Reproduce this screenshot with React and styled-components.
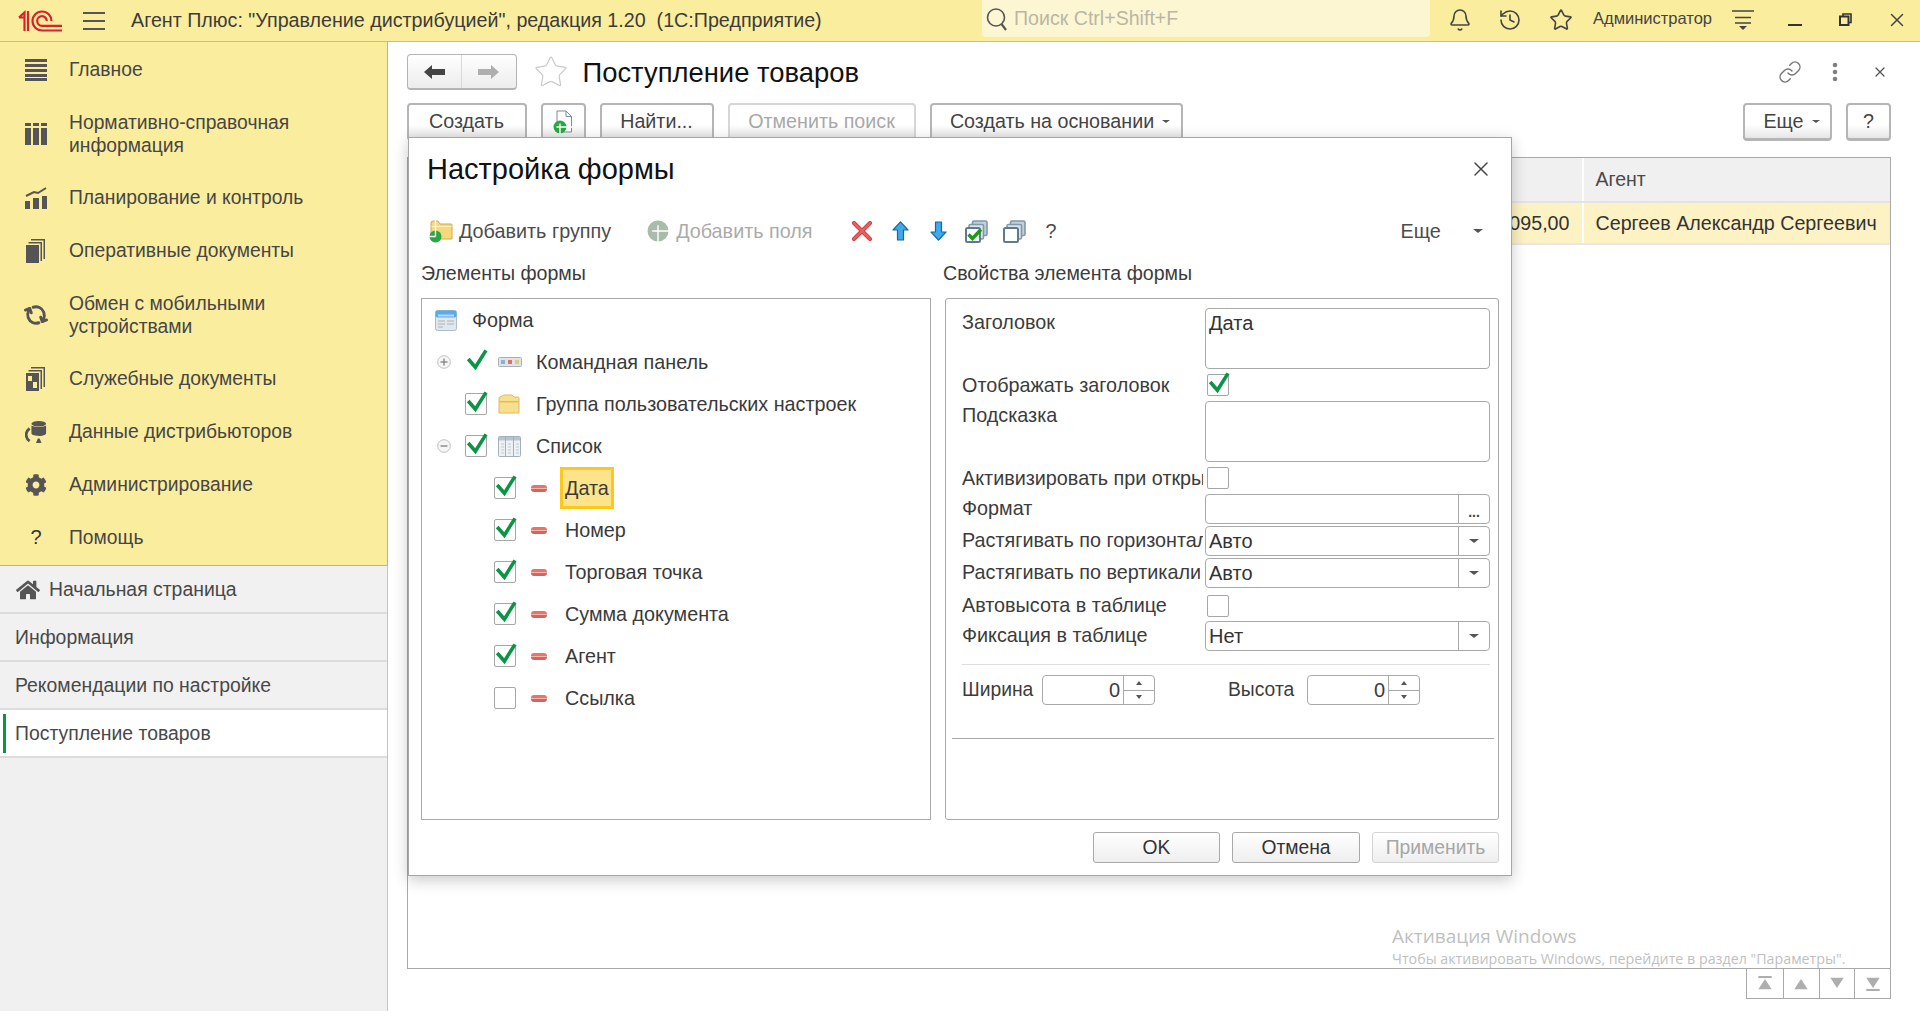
import React from "react";
import styled, { createGlobalStyle } from "styled-components";
import { Bell, History, Star, Link as LinkIcon, X, RefreshCw } from "lucide-react";
import { FaCog, FaHome } from "react-icons/fa";

const Global = createGlobalStyle`
  html, body { margin: 0; padding: 0; width: 100%; height: 100%; overflow: hidden; background: #fff; }
  #root { height: 100%; }
  * { box-sizing: border-box; }
  body { font-family: "Liberation Sans", Arial, sans-serif; font-size: 19px; color: #333; }
`;

const Page = styled.div`
  position: relative;
  width: 1920px;
  height: 1011px;
  display: flex;
  flex-direction: column;
  overflow: hidden;
`;

/* ---------- top bar ---------- */
const TopBar = styled.header`
  height: 42px;
  flex: none;
  display: flex;
  align-items: center;
  background: #fbed9e;
  border-bottom: 1px solid #cfc06c;
`;
const LogoSlot = styled.div`
  margin-left: 18px;
  width: 45px;
  height: 22px;
  display: flex;
`;
const Burger = styled.div`
  margin-left: 20px;
  width: 22px;
  height: 18px;
  display: flex;
  flex-direction: column;
  justify-content: space-between;
  span { display: block; height: 2px; background: #555; }
`;
const AppTitle = styled.div`
  margin-left: 26px;
  flex: 1;
  font-size: 19.7px;
  color: #3c3c3c;
  white-space: pre;
`;
const Search = styled.div`
  align-self: flex-start;
  width: 448px;
  height: 37px;
  background: #fdf6d2;
  border-radius: 0 0 4px 4px;
  display: flex;
  align-items: center;
  padding-left: 4px;
  gap: 6px;
  color: #b9b6a6;
  font-size: 19.6px;
`;
const TopIcons = styled.div`
  width: 490px;
  display: flex;
  align-items: center;
  padding-bottom: 2px;
  color: #444;
`;
const TopSlot = styled.div`
  margin-left: ${(p) => p.$ml}px;
  display: flex;
  align-items: center;
`;
const UserName = styled.span`
  margin-left: 20px;
  padding-bottom: 2px;
  font-size: 16.5px;
  color: #444;
  white-space: nowrap;
`;

/* ---------- body ---------- */
const Body = styled.div`
  flex: 1;
  display: flex;
  min-height: 0;
`;
const Sidebar = styled.aside`
  width: 388px;
  flex: none;
  display: flex;
  flex-direction: column;
  background: #f0f0f0;
  border-right: 1px solid #c4c4c4;
`;
const NavSection = styled.nav`
  height: 524px;
  flex: none;
  padding-top: 1px;
  background: #fbed9e;
  border-bottom: 1px solid #c9b65f;
  margin-right: -1px;
  border-right: 1px solid #c9b65f;
`;
const NavItem = styled.div`
  display: flex;
  align-items: center;
  padding: ${(p) => (p.$double ? "14.5px" : "15px")} 0 ${(p) => (p.$double ? "14.5px" : "15px")} 25px;
  line-height: 23px;
  color: #464646;
  font-size: 19.3px;
`;
const NavIconBox = styled.div`
  width: 22px;
  height: 22px;
  flex: none;
  margin-right: 22px;
  color: #555;
  display: flex;
  align-items: center;
  justify-content: center;
`;
const HelpMark = styled.span`
  font-size: 20px;
  color: #333;
`;
const TabItem = styled.div`
  position: relative;
  height: 48px;
  flex: none;
  display: flex;
  align-items: center;
  padding: 1px 0 0 15px;
  border-bottom: 2px solid #dcdcdc;
  background: ${(p) => (p.$active ? "#fff" : "#f1f1f1")};
  color: #484848;
  font-size: 19.4px;
  ${(p) =>
    p.$active &&
    `&::before { content: ""; position: absolute; left: 3px; top: 4px; bottom: 3px; width: 3px; background: #0e9447; }`}
`;
const HomeGlyph = styled.span`
  display: flex;
  margin-left: 1px;
  margin-right: 9px;
  color: #555;
`;

/* ---------- main ---------- */
const Main = styled.main`
  flex: 1;
  min-width: 0;
  display: flex;
  flex-direction: column;
  padding: 12px 29px 0 18.5px;
  background: #fff;
`;
const TitleRow = styled.div`
  height: 36px;
  display: flex;
  align-items: center;
`;
const NavPair = styled.div`
  width: 110px;
  height: 36px;
  display: flex;
  border: 1px solid #b4b4b4;
  border-bottom-width: 2px;
  border-radius: 4px;
  background: linear-gradient(#fff, #ececec);
`;
const NavPairCell = styled.div`
  flex: 1;
  display: flex;
  align-items: center;
  justify-content: center;
  & + & { border-left: 1px solid #d8d8d8; }
`;
const StarSlot = styled.div`
  margin-left: 16px;
  display: flex;
  color: #c9c9c9;
`;
const PageTitle = styled.h1`
  margin: 1px 0 0 14px;
  flex: 1;
  font-size: 27.4px;
  font-weight: 400;
  color: #111;
`;
const TitleTools = styled.div`
  display: flex;
  align-items: center;
  color: #777;
`;
const ToolSlot = styled.div`
  margin-left: ${(p) => p.$ml}px;
  display: flex;
  align-items: center;
`;
const ToolBar = styled.div`
  margin-top: 13px;
  height: 38px;
  display: flex;
  gap: 14px;
  flex: none;
`;
const Btn = styled.div`
  width: ${(p) => p.$w}px;
  height: 38px;
  flex: none;
  display: flex;
  align-items: center;
  justify-content: center;
  gap: 8px;
  padding-left: ${(p) => (p.$menu ? 8 : 0)}px;
  border: 2px solid ${(p) => (p.$off ? "#d6d6d6" : "#b5b5b5")};
  border-bottom-width: 3px;
  border-radius: 4px;
  background: linear-gradient(#fff 60%, #e6e6e6);
  color: ${(p) => (p.$off ? "#a8a8a8" : "#444")};
  font-size: 19.7px;
  margin-left: ${(p) => (p.$push ? "auto" : "0")};
`;
const Caret = styled.span`
  width: 0;
  height: 0;
  flex: none;
  border-left: ${(p) => p.$s || 4}px solid transparent;
  border-right: ${(p) => p.$s || 4}px solid transparent;
  border-top: ${(p) => (p.$s ? p.$s - 1 : 3)}px solid #555;
`;
const Table = styled.section`
  margin-top: 16px;
  height: 812px;
  flex: none;
  border: 1px solid #a9a9a9;
  display: flex;
  flex-direction: column;
`;
const TableHead = styled.div`
  height: 45px;
  display: grid;
  grid-template-columns: 1174px 1fr;
  gap: 2px;
  background: #fff;
  border-bottom: 2px solid #e3e3e3;
`;
const HeadCell = styled.div`
  background: #f0f0f0;
  display: flex;
  align-items: center;
  padding-left: 12px;
  color: #4a4a4a;
  font-size: 19.5px;
`;
const TableRow = styled.div`
  height: 42px;
  display: grid;
  grid-template-columns: 1174px 1fr;
  gap: 2px;
  border-bottom: 2px solid #e8e8e8;
`;
const RowCell = styled.div`
  background: #fdf2c4;
  display: flex;
  align-items: center;
  justify-content: ${(p) => (p.$right ? "flex-end" : "flex-start")};
  padding: 0 ${(p) => (p.$right ? "12px" : "0")} 0 ${(p) => (p.$right ? "0" : "12px")};
  color: #333;
  font-size: 19.7px;
  white-space: nowrap;
  overflow: hidden;
`;
const Pager = styled.div`
  align-self: flex-end;
  margin-top: -1px;
  width: 145px;
  height: 31px;
  display: grid;
  grid-template-columns: repeat(4, 1fr);
  border: 1px solid #a9a9a9;
`;
const PagerCell = styled.div`
  display: flex;
  align-items: center;
  justify-content: center;
  & + & { border-left: 1px solid #a9a9a9; }
`;
const Watermark = styled.div`
  position: absolute;
  left: 1392px;
  top: 922px;
  font-family: "Open Sans", sans-serif;
  color: #bfbfbf;
  pointer-events: none;
  white-space: nowrap;
`;
const WmTitle = styled.div`
  font-size: 19px;
  line-height: 28px;
`;
const WmText = styled.div`
  font-size: 14.25px;
  line-height: 17px;
`;

/* ---------- modal ---------- */
const Modal = styled.div`
  position: absolute;
  left: 408px;
  top: 137px;
  width: 1104px;
  height: 739px;
  background: #fff;
  border: 1px solid #a6a6a6;
  box-shadow: 0 4px 14px rgba(0, 0, 0, 0.22);
  display: flex;
  flex-direction: column;
  padding: 1px 12px 0;
`;
const ModalHead = styled.div`
  height: 60px;
  flex: none;
  display: flex;
  align-items: center;
  justify-content: space-between;
  padding: 0 6px 0 6px;
`;
const ModalTitle = styled.h2`
  margin: 0;
  font-size: 29px;
  font-weight: 400;
  color: #111;
`;
const CloseSlot = styled.div`
  display: flex;
  color: #444;
`;
const ActionBar = styled.div`
  margin-top: 7px;
  height: 50px;
  flex: none;
  display: flex;
  align-items: center;
  padding-left: 8px;
`;
const ActionItem = styled.div`
  margin-left: ${(p) => p.$ml || 0}px;
  display: flex;
  align-items: center;
  gap: ${(p) => p.$gap || 0}px;
  color: ${(p) => (p.$off ? "#ababab" : "#4c4c4c")};
  font-size: 19.8px;
`;
const ColumnsHead = styled.div`
  margin-top: 5px;
  height: 24px;
  flex: none;
  display: grid;
  grid-template-columns: 510px 1fr;
  gap: 12px;
  align-items: center;
  color: #3c3c3c;
  font-size: 19.6px;
`;
const Columns = styled.div`
  margin-top: 13px;
  height: 522px;
  flex: none;
  display: grid;
  grid-template-columns: 510px 554px;
  gap: 14px;
`;
const TreePanel = styled.div`
  border: 1px solid #a9a9a9;
  display: flex;
  flex-direction: column;
`;
const TreeRow = styled.div`
  height: 42px;
  flex: none;
  display: flex;
  align-items: center;
  padding-left: ${(p) => p.$pl}px;
  color: #3a3a3a;
  font-size: 19.75px;
`;
const Expander = styled.div`
  width: 14px;
  height: 14px;
  flex: none;
  margin-right: 14px;
  display: flex;
`;
const IconSlotL = styled.div`
  flex: none;
  display: flex;
  width: ${(p) => p.$w}px;
  margin: 0 ${(p) => p.$mr}px 0 ${(p) => p.$ml || 0}px;
`;
const CheckBoxBox = styled.div`
  position: relative;
  width: 22px;
  height: 22px;
  flex: none;
  border: 1px solid ${(p) => (p.$bare ? "transparent" : "#a6a6a6")};
  border-radius: 2px;
  background: #fff;
  margin-left: ${(p) => p.$ml || 0}px;
  svg { position: absolute; left: -1px; top: -1px; overflow: visible; }
`;
const Minus = styled.div`
  width: 16px;
  height: 7px;
  flex: none;
  margin: 0 13px 0 15px;
  border-radius: 3px;
  background: linear-gradient(#e2766d 0 40%, #f3b6ae 40% 60%, #d9635a 60%);
`;
const TreeLabel = styled.div`
  height: 42px;
  display: flex;
  align-items: center;
  padding: 0 2px;
  border: 3px solid ${(p) => (p.$sel ? "#fcc81f" : "transparent")};
  background: ${(p) => (p.$sel ? "#fde38a" : "transparent")};
`;
const PropsPanel = styled.div`
  border: 1px solid #a9a9a9;
  border-radius: 3px;
  padding: 9px 8px 0 16px;
  display: flex;
  flex-direction: column;
`;
const PropRow = styled.div`
  height: ${(p) => p.$h}px;
  flex: none;
  display: grid;
  grid-template-columns: 241px 1fr;
  gap: 2px;
  align-items: ${(p) => (p.$top ? "start" : "center")};
`;
const PropLabel = styled.div`
  overflow: hidden;
  white-space: nowrap;
  line-height: 23px;
  color: #3c3c3c;
  font-size: 19.8px;
  padding-top: ${(p) => (p.$top ? 3 : 0)}px;
`;
const TextArea = styled.div`
  height: 61px;
  border: 1px solid #a9a9a9;
  border-radius: 4px;
  padding: 3px 3px;
  line-height: 23px;
  color: #333;
  font-size: 20px;
`;
const Field = styled.div`
  height: 30px;
  align-self: start;
  border: 1px solid #a9a9a9;
  border-radius: 4px;
  display: flex;
  align-items: stretch;
  color: #333;
  font-size: 20px;
`;
const FieldValue = styled.div`
  flex: 1;
  display: flex;
  align-items: center;
  padding-left: 3px;
`;
const FieldButton = styled.div`
  width: 31px;
  flex: none;
  border-left: 1px solid #a9a9a9;
  display: flex;
  align-items: center;
  justify-content: center;
  font-weight: 700;
  font-size: 14px;
  padding-top: ${(p) => (p.$dots ? 6 : 0)}px;
  color: #444;
`;
const Separator = styled.div`
  margin-top: 13px;
  height: 1px;
  flex: none;
  background: #dedede;
`;
const SizeRow = styled.div`
  margin-top: 10px;
  height: 30px;
  flex: none;
  display: flex;
  align-items: center;
  color: #3c3c3c;
  font-size: 19.3px;
`;
const SizeLabel = styled.div`
  width: ${(p) => p.$w}px;
  flex: none;
  margin-left: ${(p) => p.$ml || 0}px;
`;
const Spin = styled.div`
  width: 113px;
  height: 30px;
  flex: none;
  border: 1px solid #a9a9a9;
  border-radius: 4px;
  display: flex;
  font-size: 20px;
`;
const SpinValue = styled.div`
  flex: 1;
  display: flex;
  align-items: center;
  justify-content: flex-end;
  padding-right: 3px;
`;
const SpinArrows = styled.div`
  width: 31px;
  flex: none;
  border-left: 1px solid #a9a9a9;
  display: flex;
  flex-direction: column;
`;
const SpinArrow = styled.div`
  flex: 1;
  display: flex;
  align-items: center;
  justify-content: center;
  & + & { border-top: 1px solid #a9a9a9; }
  span {
    width: 0;
    height: 0;
    border-left: 3px solid transparent;
    border-right: 3px solid transparent;
    ${(p) => (p.$up ? "border-bottom: 4px solid #555;" : "border-top: 4px solid #555;")}
  }
`;
const BottomRule = styled.div`
  margin: 33px -4px 0 -10px;
  height: 1px;
  flex: none;
  background: #a9a9a9;
`;
const Footer = styled.div`
  margin-top: 12px;
  display: flex;
  justify-content: flex-end;
  gap: 12px;
  padding-right: 0;
`;
const FootBtn = styled.div`
  width: ${(p) => p.$w}px;
  height: 31px;
  display: flex;
  align-items: center;
  justify-content: center;
  border: 1px solid ${(p) => (p.$off ? "#d4d4d4" : "#a9a9a9")};
  border-radius: 3px;
  background: linear-gradient(#fff, #eeeeee);
  color: ${(p) => (p.$off ? "#a6a6a6" : "#333")};
  font-size: 19.3px;
`;

/* ---------- drawings ---------- */
const Logo = () => (
  <svg width="45" height="22" viewBox="0 0 45 22" fill="none" stroke="#d8222b" strokeWidth="2.2">
    <path d="M1 7.5 L6.5 2.5 V21 M10 1 V21 M1 7.5 L6.5 7.5" />
    <path d="M44 20.5 H24 A9.5 9.5 0 1 1 33.5 11" />
    <path d="M44 15.8 H24 A4.8 4.8 0 1 1 28.8 11" />
  </svg>
);
const MainMenuIcon = () => (
  <svg width="22" height="22" viewBox="0 0 22 22" fill="currentColor">
    {[0, 5, 10, 15, 19].map((y) => (
      <rect key={y} x="0" y={y} width="22" height="3" />
    ))}
  </svg>
);
const CatalogIcon = () => (
  <svg width="22" height="22" viewBox="0 0 22 22" fill="currentColor">
    {[0, 8, 16].map((x) => (
      <g key={x}>
        <rect x={x} y="0" width="6" height="3" />
        <rect x={x} y="5" width="6" height="17" />
      </g>
    ))}
  </svg>
);
const PlanIcon = () => (
  <svg width="22" height="22" viewBox="0 0 22 22" fill="currentColor">
    <rect x="0" y="14" width="5" height="8" />
    <rect x="8" y="11" width="6" height="11" />
    <rect x="17" y="9" width="5" height="13" />
    <path d="M1 9 L9 5 L13 6 L21 1" fill="none" stroke="currentColor" strokeWidth="2" />
  </svg>
);
const DocsIcon = () => (
  <svg width="22" height="24" viewBox="0 0 22 24" fill="currentColor">
    <path d="M6 0 H20 V20 H18.5 V1.5 H6 Z" />
    <path d="M3.5 3 H17 V22 H15.5 V4.5 H3.5 Z" />
    <rect x="1" y="6" width="13" height="18" />
  </svg>
);
const ServiceIcon = () => (
  <svg width="22" height="24" viewBox="0 0 22 24" fill="currentColor">
    <path d="M6 0 H20 V20 H18.5 V1.5 H6 Z" />
    <path d="M3.5 3 H17 V22 H15.5 V4.5 H3.5 Z" />
    <rect x="1" y="6" width="13" height="18" />
    <rect x="3" y="9" width="4" height="5" fill="#fbed9e" />
    <rect x="8" y="15" width="4" height="6" fill="#fbed9e" />
  </svg>
);
const DistribIcon = () => (
  <svg width="24" height="24" viewBox="0 0 24 24">
    <ellipse cx="15" cy="3" rx="8" ry="3" fill="currentColor" />
    <path d="M7 5 C9 7 21 7 23 5 V14 C21 16 18 17 14 16 C10 16 7 15 7 13 Z" fill="currentColor" />
    <path d="M5 8 C0 12 0 18 5 22" fill="none" stroke="currentColor" strokeWidth="3" />
    <path d="M14 19 L12 24 H18 L16 19 Z" fill="currentColor" />
  </svg>
);
const ArrowH = ({ left, color }) => (
  <svg width="21" height="14" viewBox="0 0 21 14" fill={color}>
    <path d={left ? "M0 7 L8 0 V4 H21 V10 H8 V14 Z" : "M21 7 L13 0 V4 H0 V10 H13 V14 Z"} />
  </svg>
);
const PlusBadge = ({ cx, cy, r, fill }) => (
  <g>
    <circle cx={cx} cy={cy} r={r} fill={fill} />
    <path
      d={`M${cx - r * 0.55} ${cy} H${cx + r * 0.55} M${cx} ${cy - r * 0.55} V${cy + r * 0.55}`}
      stroke="#fff"
      strokeWidth="1.4"
    />
  </g>
);
const NewDocIcon = () => (
  <svg width="20" height="24" viewBox="0 0 20 24" fill="none">
    <path d="M4 1 H13 L18.5 6.5 V22 H4 Z M13 1 V6.5 H18.5" fill="#fff" stroke="#7d8c99" strokeWidth="1" />
    <PlusBadge cx="7" cy="17" r="6.5" fill="#27a843" />
  </svg>
);
const FolderAddIcon = () => (
  <svg width="24" height="23" viewBox="0 0 24 23">
    <path d="M2 3 Q2 1 4 1 H9 L11 4 H22 Q23 4 23 5 V19 H2 Z" fill="#f6d97c" stroke="#dba44a" strokeWidth="1" />
    <rect x="2.5" y="6" width="20" height="1" fill="#fff3c4" />
    <PlusBadge cx="6.5" cy="16.5" r="6" fill="#27a843" />
  </svg>
);
const GrayPlusIcon = () => (
  <svg width="22" height="22" viewBox="0 0 22 22">
    <PlusBadge cx="11" cy="11" r="10.5" fill="#a9bca9" />
  </svg>
);
const RedCross = () => (
  <svg width="20" height="20" viewBox="0 0 20 20" fill="none">
    <path d="M2 2 L18 18 M18 2 L2 18" stroke="#c93d3d" strokeWidth="4" strokeLinecap="round" />
    <path d="M2 2 L18 18 M18 2 L2 18" stroke="#ee6060" strokeWidth="2.4" strokeLinecap="round" />
  </svg>
);
const BlueArrow = ({ down }) => (
  <svg width="17" height="20" viewBox="0 0 17 20" style={down ? { transform: "scaleY(-1)" } : undefined}>
    <path d="M8.5 0.8 L16 9 H11.5 V19 H5.5 V9 H1 Z" fill="#3fa9ef" stroke="#17689e" strokeWidth="1.2" strokeLinejoin="round" />
  </svg>
);
const StackIcon = ({ checked }) => (
  <svg width="23" height="23" viewBox="0 0 23 23" fill="none">
    <rect x="7.5" y="1" width="14.5" height="14.5" rx="1.5" fill="#c2d0da" stroke="#7f98aa" strokeWidth="1.6" />
    <rect x="4" y="4.5" width="14.5" height="14.5" rx="1.5" fill="#dde5ea" stroke="#7f98aa" strokeWidth="1.6" />
    <rect x="1" y="8" width="14" height="14" rx="1.5" fill="#fff" stroke="#5d7a90" strokeWidth="2" />
    {checked && <path d="M3.5 14.5 L7.5 18.5 L16 9.5" stroke="#1d9a15" strokeWidth="3.4" />}
  </svg>
);
const FormIcon = () => (
  <svg width="22" height="21" viewBox="0 0 22 21">
    <rect x="0.5" y="0.5" width="21" height="20" rx="2" fill="#e1e7ec" stroke="#a9bccb" />
    <rect x="0.5" y="0.5" width="21" height="7" rx="2" fill="#5aabe8" />
    <rect x="3" y="4.5" width="16" height="2" fill="#b7dcf6" />
    <path d="M3 11 H10 M12 11 H19 M3 14 H10 M12 14 H19 M3 17 H8" stroke="#a8b4be" strokeWidth="1" />
  </svg>
);
const CommandIcon = () => (
  <svg width="24" height="10" viewBox="0 0 24 10">
    <rect x="0.5" y="0.5" width="23" height="9" rx="1" fill="#dfe4e8" stroke="#a7b2bb" />
    <rect x="3" y="3" width="4" height="4" fill="#8fb0d0" />
    <rect x="10" y="3" width="4" height="4" fill="#e0706a" />
    <rect x="17" y="3" width="4" height="4" fill="#e3c878" />
  </svg>
);
const FolderIcon = () => (
  <svg width="22" height="20" viewBox="0 0 22 20">
    <path d="M1 4 Q1 3 2 3 L6 1 H14 L16 3 H20 Q21 3 21 4 V19 H1 Z" fill="#f6e08e" stroke="#e4b666" />
    <rect x="1.5" y="7" width="19" height="1.4" fill="#e4b666" />
  </svg>
);
const ListIcon = () => (
  <svg width="23" height="21" viewBox="0 0 23 21" fill="none">
    <rect x="0.5" y="0.5" width="22" height="20" rx="1" fill="#eef1f4" stroke="#a3b0bc" />
    <rect x="1" y="1" width="21" height="3.5" fill="#b7c3cd" />
    <path d="M7.5 1 V20 M15.5 1 V20" stroke="#a3b0bc" />
    <path d="M3 8 H6 M3 11 H6 M3 14 H6 M3 17 H6 M10 8 H13 M10 11 H13 M10 14 H13 M10 17 H13 M18 8 H21 M18 11 H21 M18 14 H21 M18 17 H21" stroke="#c0cad2" />
  </svg>
);
const ExpanderIcon = ({ open }) => (
  <svg width="14" height="14" viewBox="0 0 14 14" fill="none" stroke="#8e8e8e">
    <circle cx="7" cy="7" r="6.3" stroke="#c2c2c2" fill="#f6f6f6" />
    <path d={open ? "M3.5 7 H10.5" : "M3.5 7 H10.5 M7 3.5 V10.5"} strokeWidth="1.5" />
  </svg>
);
const Check = () => (
  <svg width="22" height="22" viewBox="0 0 22 22" fill="none">
    <path d="M3.2 8 L10.4 16.2 L21 -0.6" stroke="#0b9446" strokeWidth="3.6" />
  </svg>
);
const Dots = () => (
  <svg width="6" height="20" viewBox="0 0 6 20" fill="#808080">
    <circle cx="3" cy="3" r="2.3" />
    <circle cx="3" cy="10" r="2.3" />
    <circle cx="3" cy="17" r="2.3" />
  </svg>
);
const FilterMenu = () => (
  <svg width="22" height="22" viewBox="0 0 22 22" stroke="#444" strokeWidth="1.6" fill="none">
    <path d="M0 2 H22 M3 8.5 H19 M3 14 H19" />
    <path d="M7 17 H15 L11 21 Z" fill="#444" stroke="none" />
  </svg>
);
const Restore = () => (
  <svg width="13" height="13" viewBox="0 0 13 13" fill="none" stroke="#333" strokeWidth="2">
    <rect x="1" y="3.5" width="8.5" height="8.5" />
    <path d="M4 3 V1 H12 V9.5 H10" strokeWidth="1.6" />
  </svg>
);
const SearchGlass = () => (
  <svg width="22" height="24" viewBox="0 0 22 24" fill="none" stroke="#555" strokeWidth="1.6">
    <circle cx="10" cy="10.5" r="8.5" />
    <path d="M15.5 17 L20 23" strokeWidth="2.2" />
  </svg>
);
const PagerIcon = ({ down, bar }) => (
  <svg width="14" height="15" viewBox="0 0 16 18" fill="#aeaeae" style={down ? { transform: "scaleY(-1)" } : undefined}>
    {bar && <rect x="0" y="0" width="16" height="2.5" />}
    <path d="M8 3.5 L16 16 H0 Z" />
  </svg>
);

const navItems = [
  { icon: <MainMenuIcon />, text: "Главное" },
  { icon: <CatalogIcon />, text: "Нормативно-справочная\nинформация", double: true },
  { icon: <PlanIcon />, text: "Планирование и контроль" },
  { icon: <DocsIcon />, text: "Оперативные документы" },
  { icon: <RefreshCw size={22} strokeWidth={3.2} style={{ transform: "rotate(70deg)" }} />, text: "Обмен с мобильными\nустройствами", double: true },
  { icon: <ServiceIcon />, text: "Служебные документы" },
  { icon: <DistribIcon />, text: "Данные дистрибьюторов" },
  { icon: <FaCog size={22} />, text: "Администрирование" },
  { icon: <HelpMark>?</HelpMark>, text: "Помощь" },
];
const NavText = styled.span`
  white-space: pre-line;
`;

const subItems = ["Дата", "Номер", "Торговая точка", "Сумма документа", "Агент", "Ссылка"];

const Dropdown = ({ value }) => (
  <Field>
    <FieldValue>{value}</FieldValue>
    <FieldButton>
      <Caret $s={5} />
    </FieldButton>
  </Field>
);
const SpinField = () => (
  <Spin>
    <SpinValue>0</SpinValue>
    <SpinArrows>
      <SpinArrow $up>
        <span />
      </SpinArrow>
      <SpinArrow>
        <span />
      </SpinArrow>
    </SpinArrows>
  </Spin>
);

export default function App() {
  return (
    <Page>
      <Global />
      <TopBar>
        <LogoSlot>
          <Logo />
        </LogoSlot>
        <Burger>
          <span />
          <span />
          <span />
        </Burger>
        <AppTitle>Агент Плюс: "Управление дистрибуцией", редакция 1.20  (1С:Предприятие)</AppTitle>
        <Search>
          <SearchGlass />
          Поиск Ctrl+Shift+F
        </Search>
        <TopIcons>
          <TopSlot $ml={18}>
            <Bell size={24} strokeWidth={1.6} />
          </TopSlot>
          <TopSlot $ml={26}>
            <History size={24} strokeWidth={1.6} />
          </TopSlot>
          <TopSlot $ml={27}>
            <Star size={24} strokeWidth={1.6} />
          </TopSlot>
          <UserName>Администратор</UserName>
          <TopSlot $ml={20}>
            <FilterMenu />
          </TopSlot>
          <TopSlot $ml={34}>
            <svg width="14" height="14" viewBox="0 0 14 14">
              <rect x="0" y="11" width="14" height="2" fill="#333" />
            </svg>
          </TopSlot>
          <TopSlot $ml={37}>
            <Restore />
          </TopSlot>
          <TopSlot $ml={34}>
            <X size={22} strokeWidth={1.6} />
          </TopSlot>
        </TopIcons>
      </TopBar>
      <Body>
        <Sidebar>
          <NavSection>
            {navItems.map((it) => (
              <NavItem key={it.text} $double={it.double}>
                <NavIconBox>{it.icon}</NavIconBox>
                <NavText>{it.text}</NavText>
              </NavItem>
            ))}
          </NavSection>
          <TabItem>
            <HomeGlyph>
              <FaHome size={24} />
            </HomeGlyph>
            Начальная страница
          </TabItem>
          <TabItem>Информация</TabItem>
          <TabItem>Рекомендации по настройке</TabItem>
          <TabItem $active>Поступление товаров</TabItem>
        </Sidebar>
        <Main>
          <TitleRow>
            <NavPair>
              <NavPairCell>
                <ArrowH left color="#444" />
              </NavPairCell>
              <NavPairCell>
                <ArrowH color="#aeaeae" />
              </NavPairCell>
            </NavPair>
            <StarSlot>
              <Star size={36} strokeWidth={0.8} />
            </StarSlot>
            <PageTitle>Поступление товаров</PageTitle>
            <TitleTools>
              <LinkIcon size={24} strokeWidth={1.5} />
              <ToolSlot $ml={30}>
                <Dots />
              </ToolSlot>
              <ToolSlot $ml={34}>
                <X size={16} strokeWidth={1.8} color="#555" />
              </ToolSlot>
              <ToolSlot $ml={3} />
            </TitleTools>
          </TitleRow>
          <ToolBar>
            <Btn $w={120}>Создать</Btn>
            <Btn $w={45}>
              <NewDocIcon />
            </Btn>
            <Btn $w={114}>Найти...</Btn>
            <Btn $w={188} $off>
              Отменить поиск
            </Btn>
            <Btn $w={253} $menu>
              Создать на основании
              <Caret />
            </Btn>
            <Btn $w={89} $push $menu>
              Еще
              <Caret />
            </Btn>
            <Btn $w={45}>?</Btn>
          </ToolBar>
          <Table>
            <TableHead>
              <HeadCell />
              <HeadCell>Агент</HeadCell>
            </TableHead>
            <TableRow>
              <RowCell $right>1 095,00</RowCell>
              <RowCell>Сергеев Александр Сергеевич</RowCell>
            </TableRow>
          </Table>
          <Pager>
            <PagerCell>
              <PagerIcon bar />
            </PagerCell>
            <PagerCell>
              <PagerIcon />
            </PagerCell>
            <PagerCell>
              <PagerIcon down />
            </PagerCell>
            <PagerCell>
              <PagerIcon down bar />
            </PagerCell>
          </Pager>
        </Main>
      </Body>

      <Watermark>
        <WmTitle>Активация Windows</WmTitle>
        <WmText>Чтобы активировать Windows, перейдите в раздел "Параметры".</WmText>
      </Watermark>

      <Modal>
        <ModalHead>
          <ModalTitle>Настройка формы</ModalTitle>
          <CloseSlot>
            <X size={24} strokeWidth={1.5} />
          </CloseSlot>
        </ModalHead>
        <ActionBar>
          <ActionItem $gap={6}>
            <FolderAddIcon />
            Добавить группу
          </ActionItem>
          <ActionItem $ml={36} $gap={7} $off>
            <GrayPlusIcon />
            Добавить поля
          </ActionItem>
          <ActionItem $ml={39}>
            <RedCross />
          </ActionItem>
          <ActionItem $ml={20}>
            <BlueArrow />
          </ActionItem>
          <ActionItem $ml={21}>
            <BlueArrow down />
          </ActionItem>
          <ActionItem $ml={18}>
            <StackIcon checked />
          </ActionItem>
          <ActionItem $ml={15}>
            <StackIcon />
          </ActionItem>
          <ActionItem $ml={20}>?</ActionItem>
          <ActionItem $ml={344}>Еще</ActionItem>
          <ActionItem $ml={32}>
            <Caret $s={5} />
          </ActionItem>
        </ActionBar>
        <ColumnsHead>
          <span>Элементы формы</span>
          <span>Свойства элемента формы</span>
        </ColumnsHead>
        <Columns>
          <TreePanel>
            <TreeRow $pl={13}>
              <IconSlotL $w={22} $mr={15}>
                <FormIcon />
              </IconSlotL>
              Форма
            </TreeRow>
            <TreeRow $pl={15}>
              <Expander>
                <ExpanderIcon />
              </Expander>
              <CheckBoxBox $bare>
                <Check />
              </CheckBoxBox>
              <IconSlotL $w={24} $mr={14} $ml={11}>
                <CommandIcon />
              </IconSlotL>
              Командная панель
            </TreeRow>
            <TreeRow $pl={15}>
              <Expander />
              <CheckBoxBox>
                <Check />
              </CheckBoxBox>
              <IconSlotL $w={24} $mr={14} $ml={11}>
                <FolderIcon />
              </IconSlotL>
              Группа пользовательских настроек
            </TreeRow>
            <TreeRow $pl={15}>
              <Expander>
                <ExpanderIcon open />
              </Expander>
              <CheckBoxBox>
                <Check />
              </CheckBoxBox>
              <IconSlotL $w={24} $mr={14} $ml={11}>
                <ListIcon />
              </IconSlotL>
              Список
            </TreeRow>
            {subItems.map((s, i) => (
              <TreeRow $pl={72} key={s}>
                <CheckBoxBox>{s !== "Ссылка" && <Check />}</CheckBoxBox>
                <Minus />
                <TreeLabel $sel={i === 0}>{s}</TreeLabel>
              </TreeRow>
            ))}
          </TreePanel>
          <PropsPanel>
            <PropRow $h={61} $top>
              <PropLabel $top>Заголовок</PropLabel>
              <TextArea>Дата</TextArea>
            </PropRow>
            <PropRow $h={32}>
              <PropLabel>Отображать заголовок</PropLabel>
              <CheckBoxBox $ml={2}>
                <Check />
              </CheckBoxBox>
            </PropRow>
            <PropRow $h={61} $top>
              <PropLabel $top>Подсказка</PropLabel>
              <TextArea />
            </PropRow>
            <PropRow $h={32}>
              <PropLabel>Активизировать при открытии</PropLabel>
              <CheckBoxBox $ml={2} />
            </PropRow>
            <PropRow $h={32} $top>
              <PropLabel $top>Формат</PropLabel>
              <Field>
                <FieldValue />
                <FieldButton $dots>...</FieldButton>
              </Field>
            </PropRow>
            <PropRow $h={32} $top>
              <PropLabel $top>Растягивать по горизонтали</PropLabel>
              <Dropdown value="Авто" />
            </PropRow>
            <PropRow $h={32} $top>
              <PropLabel $top>Растягивать по вертикали</PropLabel>
              <Dropdown value="Авто" />
            </PropRow>
            <PropRow $h={31}>
              <PropLabel>Автовысота в таблице</PropLabel>
              <CheckBoxBox $ml={2} />
            </PropRow>
            <PropRow $h={30} $top>
              <PropLabel $top>Фиксация в таблице</PropLabel>
              <Dropdown value="Нет" />
            </PropRow>
            <Separator />
            <SizeRow>
              <SizeLabel $w={80}>Ширина</SizeLabel>
              <SpinField />
              <SizeLabel $w={79} $ml={73}>
                Высота
              </SizeLabel>
              <SpinField />
            </SizeRow>
            <BottomRule />
          </PropsPanel>
        </Columns>
        <Footer>
          <FootBtn $w={127}>OK</FootBtn>
          <FootBtn $w={128}>Отмена</FootBtn>
          <FootBtn $w={127} $off>
            Применить
          </FootBtn>
        </Footer>
      </Modal>
    </Page>
  );
}
